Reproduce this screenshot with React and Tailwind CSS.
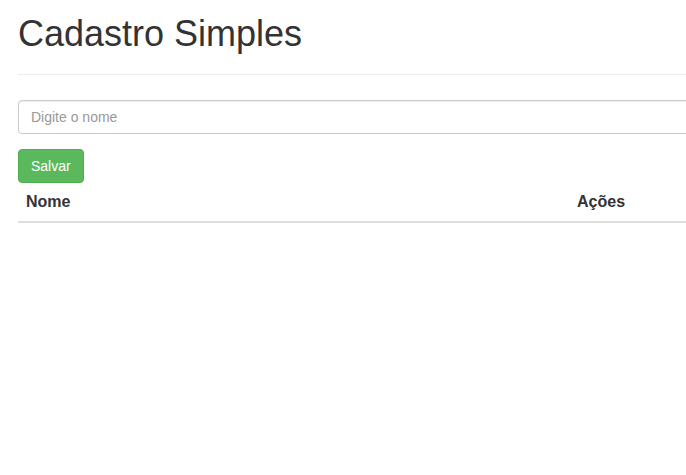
import React, { useState } from 'react';

export default function App() {
  const [nome, setNome] = useState('');
  const [pessoas, setPessoas] = useState([]);

  const salvar = () => {
    if (!nome.trim()) return;
    setPessoas(prev => [...prev, { id: Date.now(), nome }]);
    setNome('');
  };

  return (
    <div className="min-h-screen bg-white overflow-hidden font-['Liberation_Sans',Arial,sans-serif] text-[#333] text-sm">
      <div className="w-[720px] pl-[18px]">
        <div className="h-[75px] pt-[14px] border-b border-[#eee]">
          <h1 className="text-[36px] leading-[1.1] font-normal">Cadastro Simples</h1>
        </div>

        <div className="mt-[25px]">
          <input
            type="text"
            value={nome}
            onChange={e => setNome(e.target.value)}
            placeholder="Digite o nome"
            className="block w-full h-[34px] px-3 border border-[#ccc] rounded-[4px] text-sm text-[#555] placeholder:text-[#999] shadow-[inset_0_1px_1px_rgba(0,0,0,0.075)] outline-none"
          />
        </div>

        <button
          onClick={salvar}
          className="mt-[15px] h-[34px] px-3 bg-[#5cb85c] border border-[#4cae4c] rounded-[4px] text-white text-sm leading-5"
        >
          Salvar
        </button>

        <table className="w-full border-collapse">
          <thead>
            <tr className="border-b-2 border-[#ddd]">
              <th className="text-left font-bold text-base leading-[22px] p-2 w-[551px]">Nome</th>
              <th className="text-left font-bold text-base leading-[22px] p-2">Ações</th>
            </tr>
          </thead>
          <tbody>
            {pessoas.map(p => (
              <tr key={p.id} className="border-t border-[#ddd]">
                <td className="p-2">{p.nome}</td>
                <td className="p-2"></td>
              </tr>
            ))}
          </tbody>
        </table>
      </div>
    </div>
  );
}
